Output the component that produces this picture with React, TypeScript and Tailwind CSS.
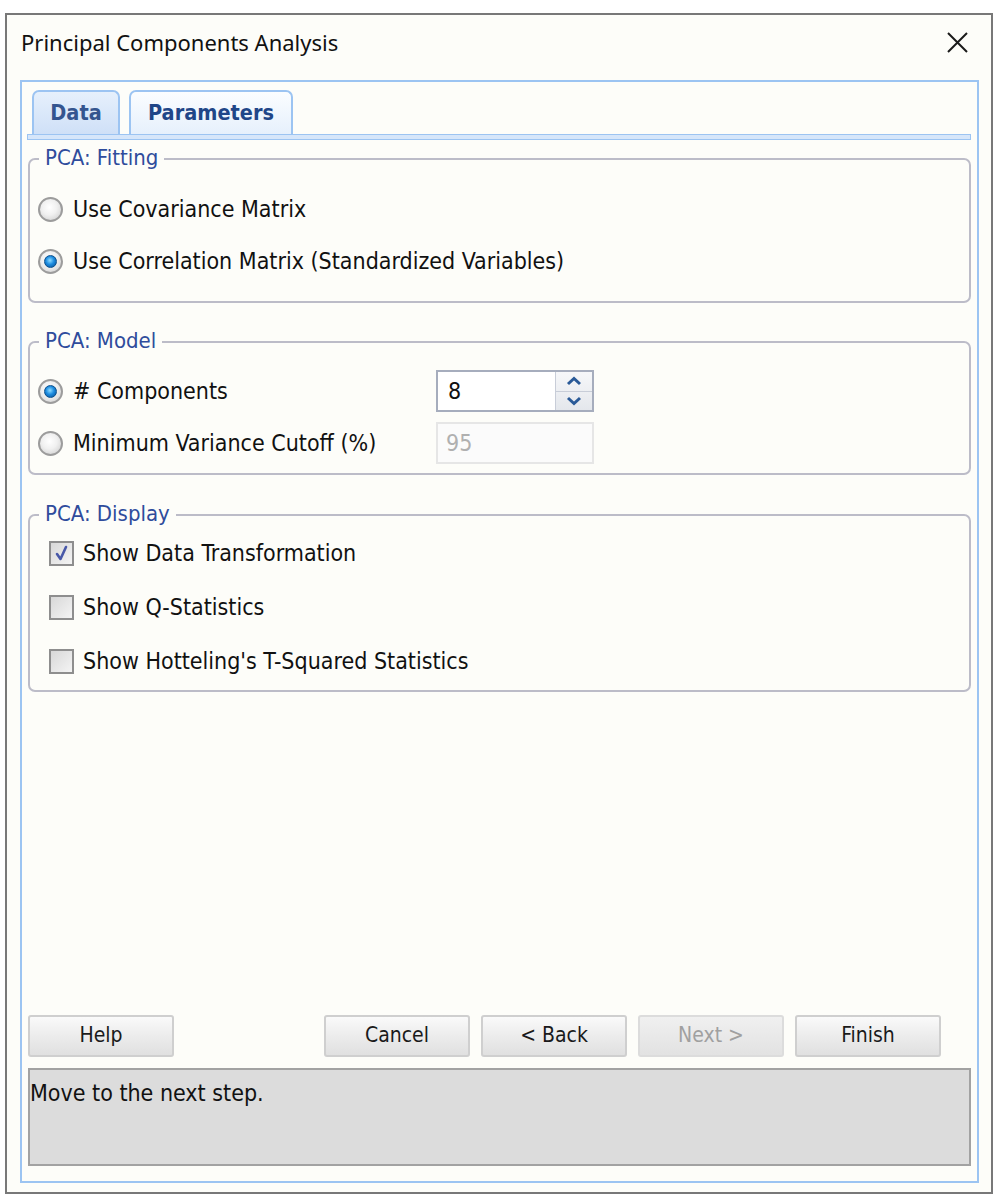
import React from 'react'

const BODY = "font-['DejaVu_Sans_Condensed','DejaVu_Sans',sans-serif]"

function Radio({ checked }: { checked?: boolean }) {
    return (
        <span className="flex h-[25px] w-[25px] shrink-0 items-center justify-center rounded-full border-2 border-[#9c9c9c] bg-[radial-gradient(circle_at_45%_40%,#ffffff,#f0f0f0_45%,#c8c8c8)]">
            {checked && (
                <span className="h-[13px] w-[13px] rounded-full border border-[#0b4f8c] bg-[radial-gradient(circle_at_45%_40%,#8fdcff,#1d8ce0_45%,#064c8f)]" />
            )}
        </span>
    )
}

function Checkbox({ checked }: { checked?: boolean }) {
    return (
        <span className="flex h-[25px] w-[25px] shrink-0 items-center justify-center border-2 border-[#8e8e8e] bg-[linear-gradient(135deg,#d8d8d8,#f4f4f4)]">
            {checked && (
                <svg width="17" height="17" viewBox="0 0 17 17">
                    <path d="M4 9 L7.5 14 L13 2" fill="none" stroke="#4858a8" strokeWidth="2.6" strokeLinejoin="round" strokeLinecap="round" />
                </svg>
            )}
        </span>
    )
}

function Group({ title, className, children }: { title: string; className: string; children: React.ReactNode }) {
    return (
        <div className={`mx-[6px] rounded-[7px] border-2 border-[#bcbcc8] ${className}`}>
            <span className="-mt-[14px] ml-[9px] block w-fit bg-[#fdfdf9] px-[6px] text-[22px] leading-[24px] text-[#2f4c9c]">
                {title}
            </span>
            {children}
        </div>
    )
}

function Button({ label, disabled, className = '' }: { label: string; disabled?: boolean; className?: string }) {
    return (
        <div
            className={`flex h-[42px] w-[146px] items-center justify-center rounded-[3px] border-2 text-[21px] ${
                disabled
                    ? 'border-[#dcdcdc] bg-[linear-gradient(#f0f0f0,#e2e2e2)] text-[#a0a0a0]'
                    : 'border-[#cfcfcf] bg-[linear-gradient(#fafafa,#ececec_50%,#e0e0e0)] text-[#1a1a1a]'
            } ${className}`}
        >
            {label}
        </div>
    )
}

export default function App() {
    return (
        <div className={`min-h-[1200px] bg-white pl-[5px] pt-[13px] ${BODY}`}>
            <div className="flex h-[1181px] w-[988px] flex-col border-2 border-[#787878] bg-[#fdfdf9] text-[#111]">
                <div className="flex h-[65px] items-center justify-between pb-[10px] pl-[14px] pr-[23px]">
                    <span className="font-['Noto_Sans',sans-serif] text-[22px] text-[#111]">Principal Components Analysis</span>
                    <svg width="21" height="21" viewBox="0 0 21 21">
                        <path d="M1 1 L20 20 M20 1 L1 20" stroke="#1a1a1a" strokeWidth="2" />
                    </svg>
                </div>

                <div className="mb-[9px] ml-[13px] mr-[12px] flex flex-1 flex-col border-2 border-[#9cc4f2]">
                    <div className="flex gap-[9px] pl-[10px] pt-[8px]">
                        <div className="flex h-[44px] w-[88px] items-center justify-center rounded-t-[7px] border-2 border-b-0 border-[#9cc4f2] bg-[linear-gradient(#e6f0fc,#cfe0f7)] text-[21.5px] font-bold text-[#34558f]">
                            Data
                        </div>
                        <div className="flex h-[44px] w-[164px] items-center justify-center rounded-t-[7px] border-2 border-b-0 border-[#9cc4f2] bg-[linear-gradient(#fbfdff,#e6f0fc)] text-[21.5px] font-bold text-[#1f4688]">
                            Parameters
                        </div>
                    </div>
                    <div className="ml-[5px] mr-[6px] h-[6px] border border-[#9cc4f2] bg-[#d6e6fa]" />

                    <Group title="PCA: Fitting" className="mt-[18px] pb-[14px]">
                        <div className="mt-[13px] flex h-[52px] items-center gap-[10px] pl-[8px] text-[23px]">
                            <Radio />
                            <span>Use Covariance Matrix</span>
                        </div>
                        <div className="flex h-[52px] items-center gap-[10px] pl-[8px] text-[23px]">
                            <Radio checked />
                            <span>Use Correlation Matrix (Standardized Variables)</span>
                        </div>
                    </Group>

                    <Group title="PCA: Model" className="mt-[38px] pb-[4px]">
                        <div className="mt-[12px] flex h-[52px] items-center gap-[10px] pl-[8px] text-[23px]">
                            <Radio checked />
                            <span className="w-[353px]"># Components</span>
                            <div className="flex h-[42px] w-[158px] border-2 border-[#a6adbd] bg-white">
                                <span className="flex flex-1 items-center pl-[10px]">8</span>
                                <div className="flex w-[37px] flex-col border-l border-[#c8cdd8] bg-[linear-gradient(#f6f7f9,#e4e7ec)]">
                                    <div className="flex flex-1 items-center justify-center border-b border-[#c8cdd8]">
                                        <svg width="16" height="10" viewBox="0 0 16 10">
                                            <path d="M2 8 L8 2.5 L14 8" fill="none" stroke="#2a5a98" strokeWidth="3" />
                                        </svg>
                                    </div>
                                    <div className="flex flex-1 items-center justify-center">
                                        <svg width="16" height="10" viewBox="0 0 16 10">
                                            <path d="M2 2 L8 7.5 L14 2" fill="none" stroke="#2a5a98" strokeWidth="3" />
                                        </svg>
                                    </div>
                                </div>
                            </div>
                        </div>
                        <div className="flex h-[52px] items-center gap-[10px] pl-[8px] text-[23px]">
                            <Radio />
                            <span className="w-[353px]">Minimum Variance Cutoff (%)</span>
                            <div className="flex h-[42px] w-[158px] items-center border-2 border-[#e6e6e6] bg-[#fbfbfb] pl-[8px] text-[#b0b0b0]">
                                95
                            </div>
                        </div>
                    </Group>

                    <Group title="PCA: Display" className="mt-[39px] pb-[2px]">
                        <div className="flex h-[54px] items-center gap-[9px] pl-[19px] text-[23px]">
                            <Checkbox checked />
                            <span>Show Data Transformation</span>
                        </div>
                        <div className="flex h-[54px] items-center gap-[9px] pl-[19px] text-[23px]">
                            <Checkbox />
                            <span>Show Q-Statistics</span>
                        </div>
                        <div className="flex h-[54px] items-center gap-[9px] pl-[19px] text-[23px]">
                            <Checkbox />
                            <span>Show Hotteling's T-Squared Statistics</span>
                        </div>
                    </Group>

                    <div className="flex-1" />

                    <div className="ml-[6px] flex gap-[11px]">
                        <Button label="Help" className="mr-[139px]" />
                        <Button label="Cancel" />
                        <Button label="< Back" />
                        <Button label="Next >" disabled />
                        <Button label="Finish" />
                    </div>

                    <div className="mb-[15px] ml-[6px] mr-[6px] mt-[11px] h-[98px] border-2 border-[#a2a2a2] bg-[#dcdcdc] pt-[9px] text-[23px] leading-[28px]">
                        Move to the next step.
                    </div>
                </div>
            </div>
        </div>
    )
}
